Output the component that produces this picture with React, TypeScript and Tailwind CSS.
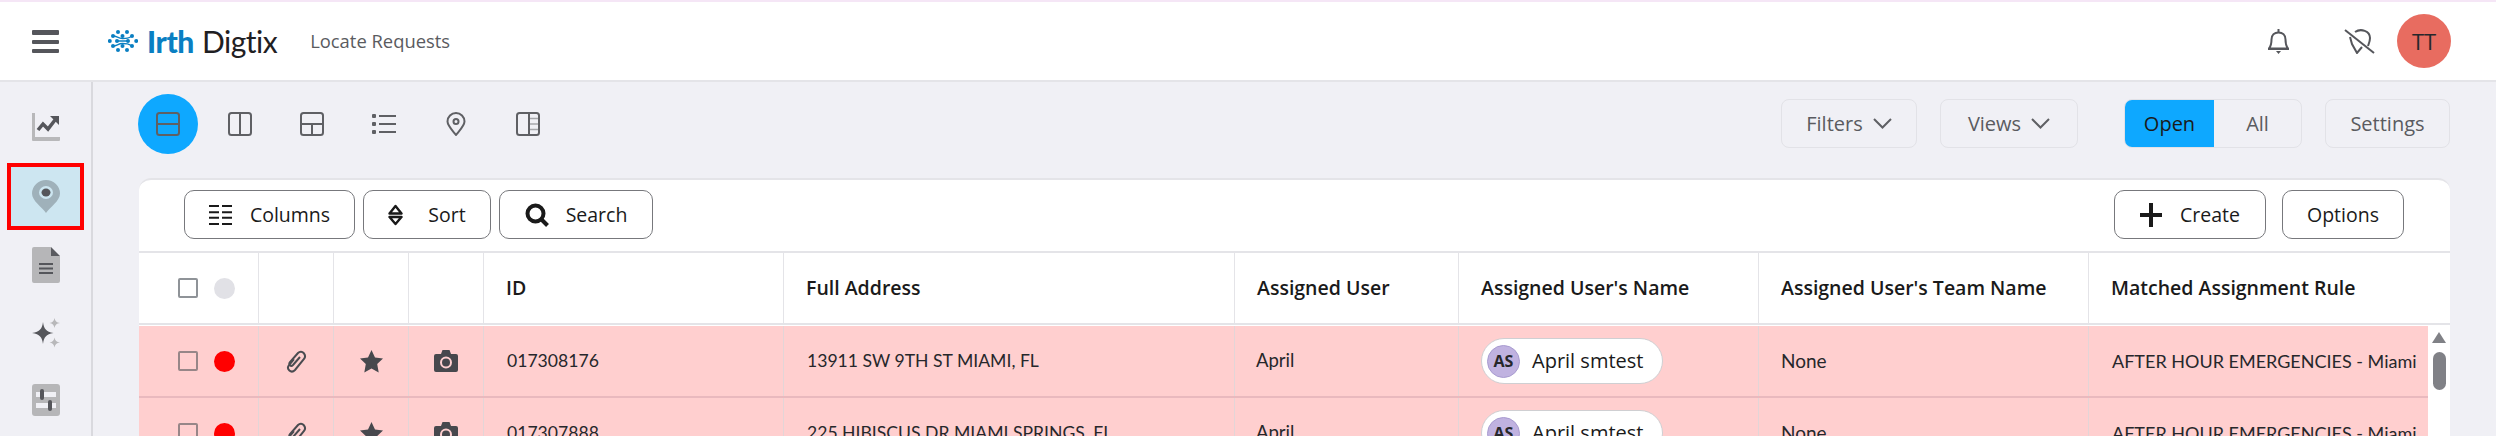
const F = "font-['Lato','Liberation_Sans',sans-serif]";
const O = "font-['Open_Sans','Liberation_Sans',sans-serif]";

function Hamburger() {
  return (
    <div className="flex w-[27px] flex-col gap-[5px]">
      <div className="h-[5px] rounded-[1px] bg-[#55565b]" />
      <div className="h-[4px] rounded-[1px] bg-[#55565b]" />
      <div className="h-[4px] rounded-[1px] bg-[#55565b]" />
    </div>
  );
}

function LogoMark() {
  const dots = [
    [10, 2], [19, 2], [5, 6], [14.500, 6], [24, 6], [1.800, 11], [9, 11], [20, 11], [28.200, 11], [5, 16], [14.500, 16], [24, 16], [10, 20], [19, 20],
  ];
  return (
    <svg width="30" height="22" viewBox="0 0 30 22" fill="#0a7fc2">
      {dots.map(([x, y], i) => (
        <circle key={i} cx={x} cy={y} r="2" />
      ))}
      <path d="M5 6C9 6 10 8.500 14.500 8.500S20 8.500 24 6M5 16C9 16 10 13.500 14.500 13.500S20 13.500 24 16M9 11H20" stroke="#0a7fc2" strokeWidth="1.300" fill="none" />
    </svg>
  );
}

function ViewIcon({ kind }: { kind: number }) {
  const c = "#5f6064";
  const common = { fill: "none", stroke: c, strokeWidth: 2 };
  return (
    <svg width="24" height="24" viewBox="0 0 24 24">
      {kind === 0 && <g {...common}><rect x="1" y="1" width="22" height="22" rx="2.500" /><path d="M1 12H23" /></g>}
      {kind === 1 && <g {...common}><rect x="1" y="1" width="22" height="22" rx="2.500" /><path d="M12 1V23" /></g>}
      {kind === 2 && <g {...common}><rect x="1" y="1" width="22" height="22" rx="2.500" /><path d="M1 12H23M12 12V23" /></g>}
      {kind === 3 && (
        <g>
          <rect x="0" y="2" width="4" height="4" rx="1" fill={c} />
          <rect x="0" y="10" width="4" height="4" rx="1" fill={c} />
          <rect x="0" y="18" width="4" height="4" rx="1" fill={c} />
          <path d="M7 4H24M7 12H24M7 20H24" stroke={c} strokeWidth="2" />
        </g>
      )}
      {kind === 4 && (
        <g {...common}>
          <path d="M12 23C8 18 3.500 13.500 3.500 9.500A8.500 8.500 0 0 1 20.500 9.500C20.500 13.500 16 18 12 23Z" />
          <circle cx="12" cy="9.500" r="2.500" />
        </g>
      )}
      {kind === 5 && (
        <g {...common}>
          <rect x="1" y="1" width="22" height="22" rx="2.500" />
          <path d="M13 1V23" />
          <path d="M14 6.500H22M14 12H22M14 17.500H22" strokeWidth="1.500" stroke="#a5a6aa" />
        </g>
      )}
    </svg>
  );
}

function ChartIcon() {
  return (
    <svg width="28" height="28" viewBox="0 0 28 28">
      <path d="M0 1.500A1.500 1.500 0 0 1 3 0V24H28V27A1 1 0 0 1 27 28H1A1 1 0 0 1 0 27Z" fill="#b8b8ba" />
      <path d="M6 17L11 11L16 16L23 7" stroke="#55565b" strokeWidth="3.500" fill="none" />
      <path d="M18 3H27V12Z" fill="#55565b" />
    </svg>
  );
}

function PinFilled() {
  return (
    <svg width="28" height="33" viewBox="0 0 28 33">
      <path d="M14 33C10 27 0 21 0 13.500A14 13.500 0 0 1 28 13.500C28 21 18 27 14 33Z" fill="#9fb1ba" />
      <ellipse cx="14" cy="12.500" rx="7" ry="6.500" fill="#cde6f1" />
      <ellipse cx="14" cy="12.500" rx="4.500" ry="4" fill="#55565b" />
    </svg>
  );
}

function DocIcon() {
  return (
    <svg width="28" height="36" viewBox="0 0 28 36">
      <path d="M2 0H19V9H28V34A2 2 0 0 1 26 36H2A2 2 0 0 1 0 34V2A2 2 0 0 1 2 0Z" fill="#b6b6b8" />
      <path d="M19 0L28 9H19Z" fill="#5a5b60" />
      <path d="M7 17H21M7 21.500H21M7 26H21" stroke="#55565b" strokeWidth="2" />
    </svg>
  );
}

function SparkIcon() {
  return (
    <svg width="28" height="30" viewBox="0 0 28 30">
      <path d="M11 4C12 11 14 13.500 21.500 15C14 16.500 12 19 11 26C10 19 8 16.500 0 15C8 13.500 10 11 11 4Z" fill="#55565b" />
      <path d="M22.500 0C23 3 24.500 4.500 28 5C24.500 5.500 23 7 22.500 10C22 7 20.500 5.500 17.500 5C20.500 4.500 22 3 22.500 0Z" fill="#b8b8ba" />
      <path d="M22.500 19.500C23 22.500 24.500 24 28 24.500C24.500 25 23 26.500 22.500 29.500C22 26.500 20.500 25 17.500 24.500C20.500 24 22 22.500 22.500 19.500Z" fill="#b8b8ba" />
    </svg>
  );
}

function SlidersIcon() {
  return (
    <svg width="28" height="32" viewBox="0 0 28 32">
      <rect width="28" height="32" rx="3" fill="#b6b6b8" />
      <rect x="4" y="8" width="20" height="5" fill="#f0f0f5" />
      <rect x="4" y="19" width="20" height="5" fill="#f0f0f5" />
      <rect x="8" y="5" width="4" height="11" rx="2" fill="#55565b" />
      <rect x="16" y="16" width="4" height="11" rx="2" fill="#55565b" />
    </svg>
  );
}

function ColumnsIcon() {
  return (
    <svg width="23" height="20" viewBox="0 0 23 20" stroke="#1a1a1a" strokeWidth="2">
      <path d="M0 1H10M13 1H23M0 7.300H10M13 7.300H23M0 12.700H10M13 12.700H23M0 19H10M13 19H23" />
    </svg>
  );
}

function SortIcon() {
  return (
    <svg width="15" height="22" viewBox="0 0 15 22" fill="none" stroke="#1a1a1a" strokeWidth="2.400" strokeLinejoin="round">
      <path d="M1.500 9.500L7.500 2L13.500 9.500Z" />
      <path d="M1.500 13L7.500 20L13.500 13Z" />
    </svg>
  );
}

function SearchIcon() {
  return (
    <svg width="24" height="24" viewBox="0 0 24 24" fill="none" stroke="#1a1a1a">
      <circle cx="10.500" cy="10.500" r="8" strokeWidth="4" />
      <path d="M15.500 15.500L22.500 22.500" strokeWidth="4" />
    </svg>
  );
}

function PlusIcon() {
  return (
    <svg width="22" height="24" viewBox="0 0 22 24" stroke="#1a1a1a" strokeWidth="4">
      <path d="M11 0V24M0 12H22" />
    </svg>
  );
}

function Chevron() {
  return (
    <svg width="19" height="11" viewBox="0 0 19 11" fill="none" stroke="#5f6064" strokeWidth="2">
      <path d="M1 1L9.500 9.500L18 1" />
    </svg>
  );
}

function Bell() {
  return (
    <svg width="21" height="25" viewBox="0 0 21 25" fill="none" stroke="#55565b" strokeWidth="2">
      <path d="M1 19.500C3.500 16.500 3.500 14 3.500 10.500C3.500 6 6.500 3.500 10.500 3.500S17.500 6 17.500 10.500C17.500 14 17.500 16.500 20 19.500Z" />
      <path d="M10.500 0V3" />
      <path d="M0 19H21V21H0Z" fill="#55565b" stroke="none" />
      <path d="M8 22H13L10.500 25Z" fill="#55565b" stroke="none" />
    </svg>
  );
}

function PinOff() {
  return (
    <svg width="31" height="25" viewBox="0 0 31 25" fill="none" stroke="#55565b" strokeWidth="2">
      <path d="M1 1L30 24" />
      <path d="M11 3C17 -1 26 2 26 9C26 12 25 14 24 17" />
      <path d="M6 8L8 15L13 24L18 18" />
    </svg>
  );
}

function Clip() {
  return (
    <svg width="22" height="24" viewBox="0 0 22 24" fill="none" stroke="#4a4b50" strokeWidth="2">
      <path d="M9 10L4 16C1 20 6 25 10 21L19 10C22 6 17 0 13 4L5 13C3 16 6 18 8 16L15 8" />
    </svg>
  );
}

function Star() {
  return (
    <svg width="23" height="23" viewBox="0 0 23 23" fill="#47484d">
      <path d="M11.500 0L15 7.500L23 8.500L17.200 14L18.700 22.500L11.500 18.500L4.300 22.500L5.800 14L0 8.500L8 7.500Z" />
    </svg>
  );
}

function Camera() {
  return (
    <svg width="24" height="22" viewBox="0 0 24 22">
      <path d="M2 4H7L8.500 0H15.500L17 4H22A2 2 0 0 1 24 6V20A2 2 0 0 1 22 22H2A2 2 0 0 1 0 20V6A2 2 0 0 1 2 4Z" fill="#47484d" />
      <circle cx="12" cy="12.500" r="5" fill="#47484d" stroke="#ffd0d0" strokeWidth="2" />
    </svg>
  );
}

function Outlined({ w, icon, label, gap }: { w: string; icon?: React.ReactNode; label: string; gap?: string }) {
  return (
    <div className={`flex h-[49px] ${w} items-center justify-center ${gap ?? "gap-[18px]"} rounded-[10px] border border-[#77787c] ${O} text-[19.500px] text-[#1a1a1a]`}>
      {icon}
      <span>{label}</span>
    </div>
  );
}

function Soft({ w, label, chevron }: { w: string; label: string; chevron?: boolean }) {
  return (
    <div className={`flex h-[49px] ${w} items-center justify-center gap-[10px] rounded-[8px] border border-[#e2e2e7] ${O} text-[20px] text-[#5a5b60]`}>
      <span>{label}</span>
      {chevron && <Chevron />}
    </div>
  );
}

const widths = ["w-[120px]", "w-[75px]", "w-[75px]", "w-[75px]", "w-[300px]", "w-[451px]", "w-[224px]", "w-[300px]", "w-[330px]", "w-[361px]"];
const heads = ["ID", "Full Address", "Assigned User", "Assigned User's Name", "Assigned User's Team Name", "Matched Assignment Rule"];

function Row({ id, addr }: { id: string; addr: string }) {
  const cell = "flex h-full shrink-0 items-center border-r border-[#e3d5d7]";
  return (
    <div className="flex h-[72px] w-[2289px] shrink-0 border-b-2 border-[#e9b9be] bg-[#ffcfcf] text-[17.600px] text-[#26272b]">
      <div className={`${cell} ${widths[0]} pl-[39px]`}>
        <div className="h-[20px] w-[20px] rounded-[2px] border-2 border-[#978688]" />
        <div className="ml-[16px] h-[21px] w-[21px] rounded-full bg-[#ff0000]" />
      </div>
      <div className={`${cell} ${widths[1]} justify-center`}><Clip /></div>
      <div className={`${cell} ${widths[2]} justify-center`}><Star /></div>
      <div className={`${cell} ${widths[3]} justify-center`}><Camera /></div>
      <div className={`${cell} ${widths[4]} pl-[23px]`}>{id}</div>
      <div className={`${cell} ${widths[5]} pl-[23px]`}>{addr}</div>
      <div className={`${cell} ${widths[6]} pl-[21px] text-[18.500px]`}>April</div>
      <div className={`${cell} ${widths[7]} pl-[22px]`}>
        <div className="flex h-[46px] w-[182px] items-center gap-[12px] rounded-full border border-[#cfcfd2] bg-white pl-[5px]">
          <div className={`flex h-[33px] w-[33px] items-center justify-center rounded-full border border-[#a89bd0] bg-[#c0b2e0] ${O} text-[16px] font-bold text-[#26272b]`}>AS</div>
          <span className={`${O} text-[20px] text-[#1a1a1a]`}>April smtest</span>
        </div>
      </div>
      <div className={`${cell} ${widths[8]} pl-[22px] text-[19px]`}>None</div>
      <div className="flex h-full min-w-0 flex-1 items-center overflow-hidden whitespace-nowrap pl-[23px] text-[18px]">AFTER HOUR EMERGENCIES - Miami</div>
    </div>
  );
}

export default function App() {
  return (
    <div className={`flex h-[436px] w-[2496px] flex-col overflow-hidden bg-[#f0f0f5] ${F}`}>
      <div className="h-[2px] shrink-0 bg-[#f5e6f6]" />
      <header className="flex h-[80px] shrink-0 items-center border-b-2 border-[#e4e4e8] bg-white pl-[32px]">
        <Hamburger />
        <div className="ml-[49px]"><LogoMark /></div>
        <span className="ml-[9px] text-[30px] leading-none font-black tracking-[-0.4px] text-[#0a7fc2]">Irth</span>
        <span className="ml-[8px] text-[30px] leading-none tracking-[-0.5px] text-[#1f2023]">Digtix</span>
        <span className={`ml-[33px] ${O} text-[18.400px] text-[#5a5b60]`}>Locate Requests</span>
        <div className="ml-auto flex items-center pr-[45px]">
          <Bell />
          <div className="ml-[55px]"><PinOff /></div>
          <div className={`ml-[22px] flex h-[54px] w-[54px] items-center justify-center rounded-full bg-[#e86c60] ${O} text-[22px] text-[#26272b]`}>TT</div>
        </div>
      </header>
      <div className="flex min-h-0 flex-1">
        <aside className="flex w-[93px] shrink-0 flex-col items-center border-r-2 border-[#d9d9de] pt-[31px]">
          <ChartIcon />
          <div className="mt-[22px] flex h-[67px] w-[77px] items-center justify-center border-4 border-[#ff0000] bg-[#cde6f1]"><PinFilled /></div>
          <div className="mt-[17px]"><DocIcon /></div>
          <div className="mt-[35px]"><SparkIcon /></div>
          <div className="mt-[36px]"><SlidersIcon /></div>
        </aside>
        <main className="flex min-w-0 flex-1 flex-col pl-[46px]">
          <div className="flex h-[96px] shrink-0 items-start pt-[12px] pr-[46px]">
            <div className="-ml-[1px] flex items-center gap-[12px]">
              {[0, 1, 2, 3, 4, 5].map((k) => (
                <div key={k} className={`flex h-[60px] w-[60px] items-center justify-center rounded-full ${k === 0 ? "bg-[#0ea8ff]" : ""}`}>
                  <ViewIcon kind={k} />
                </div>
              ))}
            </div>
            <div className="mt-[5px] ml-auto flex items-center gap-[23px]">
              <Soft w="w-[136px]" label="Filters" chevron />
              <Soft w="w-[138px]" label="Views" chevron />
              <div className={`ml-[23px] flex h-[49px] w-[178px] overflow-hidden rounded-[8px] border border-[#e2e2e7] ${O} text-[20px]`}>
                <div className="flex w-[89px] items-center justify-center bg-[#0ea8ff] text-[#1a1a1a]">Open</div>
                <div className="flex flex-1 items-center justify-center text-[#5a5b60]">All</div>
              </div>
              <Soft w="w-[125px]" label="Settings" />
            </div>
          </div>
          <section className="flex min-h-0 w-[2311px] flex-1 flex-col overflow-hidden rounded-t-[12px] border-t-2 border-[#e4e4e8] bg-white">
            <div className="flex h-[71px] shrink-0 items-start pt-[10px] pr-[46px] pl-[45px]">
              <div className="flex gap-[8px]">
                <Outlined w="w-[171px]" icon={<ColumnsIcon />} label="Columns" />
                <Outlined w="w-[128px]" icon={<SortIcon />} label="Sort" gap="gap-[25px]" />
                <Outlined w="w-[154px]" icon={<SearchIcon />} label="Search" gap="gap-[17px]" />
              </div>
              <div className="ml-auto flex gap-[16px]">
                <Outlined w="w-[152px]" icon={<PlusIcon />} label="Create" />
                <Outlined w="w-[122px]" label="Options" />
              </div>
            </div>
            <div className={`flex h-[74px] shrink-0 border-y-2 border-[#e4e4e8] bg-white ${O} text-[19.500px] font-semibold text-[#1a1a1a]`}>
              <div className={`flex shrink-0 items-center border-r border-[#e4e4e8] pl-[39px] ${widths[0]}`}>
                <div className="h-[20px] w-[20px] rounded-[2px] border-2 border-[#8f9398]" />
                <div className="ml-[16px] h-[21px] w-[21px] rounded-full bg-[#e1e1e6]" />
              </div>
              <div className={`shrink-0 border-r border-[#e4e4e8] ${widths[1]}`} />
              <div className={`shrink-0 border-r border-[#e4e4e8] ${widths[2]}`} />
              <div className={`shrink-0 border-r border-[#e4e4e8] ${widths[3]}`} />
              {heads.map((h, i) => (
                <div key={h} className={`flex shrink-0 items-center pl-[22px] ${i < 5 ? "border-r border-[#e4e4e8]" : ""} ${widths[i + 4]}`}>{h}</div>
              ))}
            </div>
            <div className="mt-[1px] flex min-h-0 flex-1">
              <div className="flex min-w-0 flex-col">
                <Row id="017308176" addr="13911 SW 9TH ST MIAMI, FL" />
                <Row id="017307888" addr="225 HIBISCUS DR MIAMI SPRINGS, FL" />
              </div>
              <div className="flex w-[22px] shrink-0 flex-col items-center bg-white pt-[6px]">
                <div className="h-0 w-0 border-x-[7px] border-b-[11px] border-x-transparent border-b-[#808186]" />
                <div className="mt-[9px] h-[38px] w-[13px] rounded-full bg-[#808186]" />
              </div>
            </div>
          </section>
        </main>
      </div>
    </div>
  );
}
